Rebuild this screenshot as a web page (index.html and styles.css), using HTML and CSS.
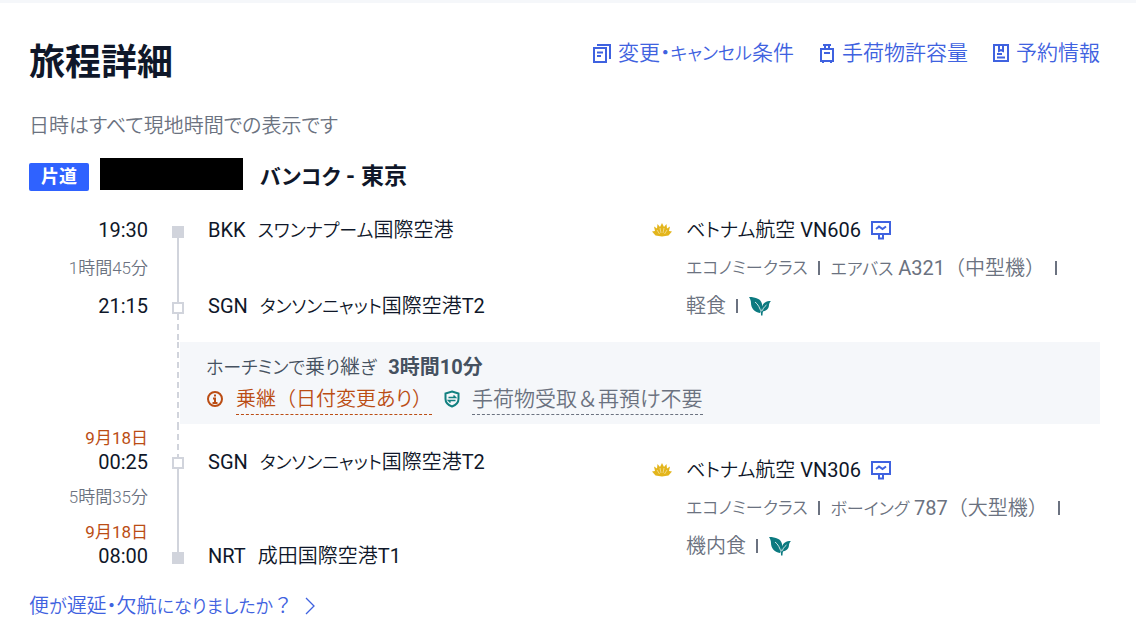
FILE: index.html
```html
<!DOCTYPE html>
<html lang="ja">
<head>
    <meta charset="UTF-8">
    <meta name="viewport" content="width=device-width, initial-scale=1.0">
    <title>旅程詳細</title>
    <link rel="stylesheet" href="styles.css">
</head>
<body>

    <!-- shared icons -->
    <svg class="sprite" aria-hidden="true">
        <symbol id="lotus" viewBox="0 0 20 14">
            <path d="M10 0 12 4 14.500 1 15 5.500 18 3.500 17 8 20 8.500 16.500 12.500 10 13.500 3.500 12.500 0 8.500 3 8 2 3.500 5 5.500 5.500 1 8 4Z" fill="#e3b51c"/>
            <path d="M8 5 9 10M12 5 11 10M5 7 7.500 11M15 7 12.500 11" stroke="#f7e7ac" stroke-width=".7" fill="none"/>
        </symbol>
        <symbol id="seat" viewBox="0 0 20 20">
            <path d="M1 2h18v12H1ZM8 14v4.500h4V14" fill="none" stroke="#3f62e0" stroke-width="2"/>
            <path d="M5 9 8 6.500 11.500 9 15 6.500" fill="none" stroke="#3f62e0" stroke-width="2"/>
        </symbol>
        <symbol id="leaf" viewBox="0 0 22 20">
            <path d="M0 1C7 1 12 3 13 8C13.500 12 12.500 15 11 17C5 16 2 12 2 7C2 4.500 1 2.500 0 1Z" fill="#0c7a80"/>
            <path d="M22 5C17 5 14 7 13 10.500C12.500 13 12.500 14 13 15.500C18 15 20 12 20 9C20 7.500 21 6 22 5Z" fill="#0c7a80"/>
            <path d="M6 6C9 8 11 12 12.300 17M17.500 9C15 11 13.500 13 12.700 17" fill="none" stroke="#fff" stroke-width=".8"/>
            <path d="M11 14C12 16 12 18 12 19.500H13.500C13.500 17 14 15 14.500 14L12.700 15.500Z" fill="#0c7a80"/>
        </symbol>
    </svg>

    <main class="trip">
        <header class="trip-header">
            <h1>旅程詳細</h1>
            <nav class="links">
                <a href="#">
                    <svg width="18" height="20" viewBox="0 0 18 20" fill="none" stroke="#3f62e0" stroke-width="2"><path d="M1 5h12v14H1ZM4 2h13v14M4 9.500h6M4 13h4"/></svg>
                    <span>変更・<span class="kana">キャンセル</span>条件</span>
                </a>
                <a href="#">
                    <svg width="16" height="20" viewBox="0 0 16 20" fill="none" stroke="#3f62e0" stroke-width="2"><path d="M2 6h12v12H2ZM4 2h8M6 2v4M10 2v4M5 10h6M4 18v2M12 18v2"/></svg>
                    手荷物許容量
                </a>
                <a href="#">
                    <svg width="16" height="20" viewBox="0 0 16 20" fill="none" stroke="#3f62e0" stroke-width="2"><path d="M1 2h14v16H1ZM6 2v6l2-1 2 1V2M4 11h5M4 14.500h8"/></svg>
                    予約情報
                </a>
            </nav>
        </header>

        <p class="note">日時はすべて現地時間での表示です</p>

        <div class="route">
            <span class="badge">片道</span>
            <span class="redacted"></span>
            <h2><span class="kana">バンコク</span> - 東京</h2>
        </div>

        <section class="leg">
            <div class="time">19:30</div>
            <div class="place"><span>BKK</span><span><span class="kana">スワンナプーム</span>国際空港</span></div>
            <div class="duration">1時間45分</div>
            <div class="time">21:15</div>
            <div class="place"><span>SGN</span><span><span class="kana">タンソンニャット</span>国際空港<span class="latin">T2</span></span></div>
            <div class="rail">
                <i class="dot"></i><i class="line"></i><i class="dot hollow"></i><i class="dash"></i>
            </div>
            <div class="flight">
                <svg class="logo" width="20" height="14"><use href="#lotus"/></svg>
                <div>
                    <p class="name"><span><span class="kana">ベトナム</span>航空 <span class="latin">VN606</span></span> <svg width="20" height="20"><use href="#seat"/></svg></p>
                    <p><span class="kana">エコノミークラス</span><i class="sep"></i><span><span class="kana">エアバス</span> <span class="latin">A321</span><span class="wide">（中型機）</span></span><i class="sep"></i></p>
                    <p><span>軽食</span><i class="sep"></i><svg width="22" height="20"><use href="#leaf"/></svg></p>
                </div>
            </div>
        </section>

        <section class="layover">
            <div class="rail"><i class="dash"></i></div>
            <div class="layover-box">
                <p><span><span class="kana">ホーチミンで</span>乗<span class="kana">り</span>継<span class="kana">ぎ</span></span> <strong>3時間10分</strong></p>
                <p>
                    <svg width="18" height="18" viewBox="0 0 18 18" fill="none" stroke="#bb4d14" stroke-width="2"><circle cx="9" cy="9" r="7"/><path d="M9 4.500v2M7 8.500h2V13M6.500 13h5"/></svg>
                    <a href="#" class="warn">乗継<span class="wide">（日付変更</span>あり<span class="wide">）</span></a>
                    <svg width="16" height="18" viewBox="0 0 16 18" fill="none" stroke="#128080" stroke-width="2"><path d="M8 1.500 14.500 3.500V9C14.500 12.500 12 15 8 16.500C4 15 1.500 12.500 1.500 9V3.500Z"/><path d="M4.500 7.500h7L9.500 5.500M11.500 10.500h-7l2 2" stroke-width="1.500"/></svg>
                    <a href="#" class="info">手荷物受取<span class="wide">＆</span>再預け不要</a>
                </p>
            </div>
        </section>

        <section class="leg second">
            <div class="time"><span class="date">9月18日</span>00:25</div>
            <div class="place"><span>SGN</span><span><span class="kana">タンソンニャット</span>国際空港<span class="latin">T2</span></span></div>
            <div class="duration">5時間35分</div>
            <div class="time"><span class="date">9月18日</span>08:00</div>
            <div class="place"><span>NRT</span><span>成田国際空港<span class="latin">T1</span></span></div>
            <div class="rail">
                <i class="dash"></i><i class="dot hollow"></i><i class="line"></i><i class="dot"></i>
            </div>
            <div class="flight">
                <svg class="logo" width="20" height="14"><use href="#lotus"/></svg>
                <div>
                    <p class="name"><span><span class="kana">ベトナム</span>航空 <span class="latin">VN306</span></span> <svg width="20" height="20"><use href="#seat"/></svg></p>
                    <p><span class="kana">エコノミークラス</span><i class="sep"></i><span><span class="kana">ボーイング</span> <span class="latin">787</span><span class="wide">（大型機）</span></span><i class="sep"></i></p>
                    <p><span>機内食</span><i class="sep"></i><svg width="22" height="20"><use href="#leaf"/></svg></p>
                </div>
            </div>
        </section>

        <a href="#" class="delay">
            <span>便<span class="kana">が</span>遅延・欠航<span class="kana">になりましたか</span><span class="wide">？</span></span>
            <svg width="12" height="18" viewBox="0 0 12 18" fill="none" stroke="#3f62e0" stroke-width="1.300"><path d="M2 1 10 9 2 17"/></svg>
        </a>
    </main>

</body>
</html>
```
FILE: styles.css
```css
* {
    box-sizing: border-box;
}

body {
    margin: 0;
    border-top: 3px solid #f5f7fa;
    background: #fff;
    color: #0f1729;
    font-family: Roboto, 'Noto Sans CJK JP', sans-serif;
    font-size: 20px;
    font-weight: 400;
    font-feature-settings: 'palt';
    line-height: 24px;
}

h1, h2, p {
    margin: 0;
}

a {
    color: #3f62e0;
    text-decoration: none;
}

svg {
    flex: none;
}

.sprite {
    display: none;
}

/* brackets keep their full width */
.wide {
    font-feature-settings: normal;
}

/* kana are set a little smaller than kanji */
.kana {
    font-size: 18px;
    line-height: 1;
}

.latin {
    font-weight: 400;
}

.trip {
    padding: 34px 36px 20px 29px;
}

.trip-header {
    display: flex;
    justify-content: space-between;
    align-items: flex-start;
}

h1 {
    font-size: 36px;
    line-height: 52px;
}

.links {
    display: flex;
    gap: 25px;
    padding-top: 4px;
}

.links a {
    display: flex;
    align-items: center;
    gap: 7px;
    font-size: 21px;
    font-weight: 350;
}

.note {
    margin-top: 25px;
    color: #6b7280;
    font-weight: 350;
}

.route {
    display: flex;
    align-items: center;
    margin-top: 19px;
    height: 34px;
}

.badge {
    padding: 2px 12px;
    margin-top: 6px;
    border-radius: 2px;
    background: #2f62ff;
    color: #fff;
    font-size: 18px;
    font-weight: 700;
}

.redacted {
    width: 143px;
    height: 32px;
    margin: 0 17px 0 11px;
    background: #000;
}

h2 {
    margin-top: 6px;
    font-size: 23px;
}

h2 .kana {
    font-size: 21px;
}

.leg {
    display: grid;
    grid-template-columns: 119px 60px 1fr 448px;
    grid-template-rows: 38px 38px 38px;
    margin-top: 20px;
    padding-bottom: 17px;
    line-height: 38px;
}

.time, .duration {
    grid-column: 1;
    text-align: right;
}

.duration {
    color: #6b7280;
    font-size: 17px;
    font-weight: 350;
}

.place {
    grid-column: 3;
    display: flex;
    gap: 12px;
    font-weight: 350;
}

.place > span:first-child {
    font-weight: 400;
}

.rail {
    grid-column: 2;
    grid-row: 1 / 4;
    display: flex;
    flex-direction: column;
    align-items: center;
    margin-bottom: -17px;
    padding-top: 15px;
}

.dot {
    width: 12px;
    height: 12px;
    background: #d1d4dc;
}

.dot.hollow {
    border: 2px solid #d1d4dc;
    background: #fff;
}

.line {
    flex: 1;
    width: 2px;
    background: #d1d4dc;
}

.dash {
    width: 2px;
    height: 28px;
    background: repeating-linear-gradient(#d1d4dc 0 6px, transparent 6px 10px);
}

.flight {
    grid-column: 4;
    grid-row: 1 / 4;
    display: flex;
    gap: 14px;
    white-space: nowrap;
}

.logo {
    margin-top: 12px;
}

.flight p {
    display: flex;
    align-items: center;
    height: 38px;
    color: #6b7280;
    font-weight: 350;
}

.flight p .kana {
    font-size: 17px;
}

.flight .name {
    gap: 10px;
    color: #0f1729;
}

.flight .name .kana {
    font-size: 19px;
}

.sep {
    width: 2px;
    height: 14px;
    margin: 0 11px 0 10px;
    background: #6b7280;
}

.layover {
    display: flex;
    padding-left: 148px;
}

.layover .rail {
    margin: 0;
    padding: 0;
}

.layover .dash {
    flex: 1;
}

.layover-box {
    flex: 1;
    margin-left: 1px;
    padding: 9px 26px;
    background: #f5f7fa;
    color: #455160;
    font-weight: 350;
}

.layover-box p {
    display: flex;
    align-items: center;
    gap: 12px;
    height: 32px;
}

.layover-box strong {
    font-weight: 700;
}

.layover-box a {
    border-bottom: 1px dashed;
    line-height: 30px;
}

.layover-box .warn {
    color: #bb4d14;
}

.layover-box .info {
    color: #6b7280;
    font-size: 21px;
}

.second {
    grid-template-rows: 48px 46px 48px;
    margin-top: 0;
    padding: 2px 0 0;
    line-height: 24px;
}

.second .place {
    align-items: flex-end;
}

.second .duration {
    line-height: 46px;
}

.second .rail {
    margin: -2px 0 0;
    padding: 0 0 4px;
}

.second .dash {
    height: 33px;
}

.second .flight {
    padding-top: 25px;
}

.date {
    display: block;
    color: #bb4d14;
    font-size: 17px;
}

.delay {
    display: inline-flex;
    align-items: center;
    gap: 11px;
    margin-top: 26px;
    font-weight: 350;
}
```
